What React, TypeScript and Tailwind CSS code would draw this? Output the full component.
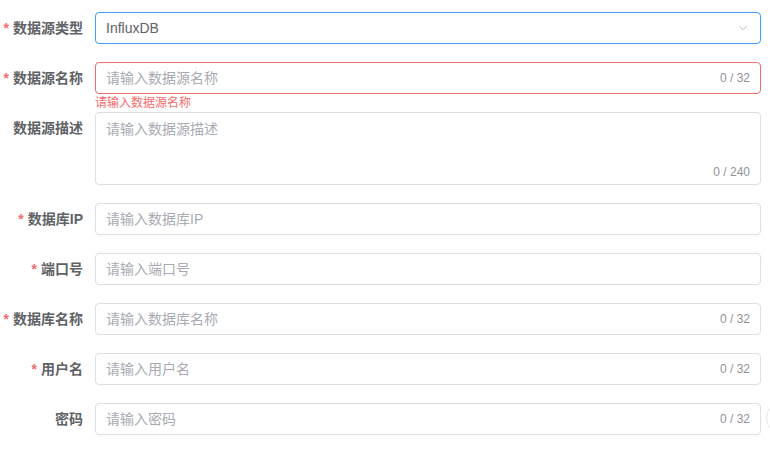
import { ChevronDown } from "lucide-react";

type Field = {
  label: string;
  required?: boolean;
  placeholder?: string;
  value?: string;
  max?: number;
  kind?: "select" | "textarea" | "input";
  error?: string;
};

const fields: Field[] = [
  { label: "数据源类型", required: true, value: "InfluxDB", kind: "select" },
  {
    label: "数据源名称",
    required: true,
    placeholder: "请输入数据源名称",
    max: 32,
    error: "请输入数据源名称",
  },
  { label: "数据源描述", placeholder: "请输入数据源描述", max: 240, kind: "textarea" },
  { label: "数据库IP", required: true, placeholder: "请输入数据库IP" },
  { label: "端口号", required: true, placeholder: "请输入端口号" },
  { label: "数据库名称", required: true, placeholder: "请输入数据库名称", max: 32 },
  { label: "用户名", required: true, placeholder: "请输入用户名", max: 32 },
  { label: "密码", placeholder: "请输入密码", max: 32 },
];

function FormItem({ field }: { field: Field }) {
  const border = field.kind === "select"
    ? "border-[#409eff]"
    : field.error
      ? "border-[#f56c6c]"
      : "border-[#dcdfe6]";

  return (
    <div className="relative mb-[18px] flex">
      <label className="w-[95px] shrink-0 pr-[12px] text-right text-[14px] font-bold leading-[32px] text-[#606266]">
        {field.required && <span className="mr-[4px] text-[#f56c6c]">*</span>}
        {field.label}
      </label>
      <div className="relative w-[666px]">
        {field.kind === "textarea" ? (
          <div className={`relative h-[73px] rounded-[4px] border bg-white ${border}`}>
            <div className="px-[10px] pt-[5px] text-[14px] leading-[22px] text-[#a8abb2]">
              {field.placeholder}
            </div>
            <span className="absolute bottom-[4px] right-[10px] text-[12px] leading-[16px] text-[#909399]">
              0 / {field.max}
            </span>
          </div>
        ) : (
          <div className={`flex h-[32px] items-center rounded-[4px] border bg-white px-[10px] ${border}`}>
            <span
              className={`flex-1 text-[14px] ${field.value ? "text-[#606266]" : "text-[#a8abb2]"}`}
            >
              {field.value ?? field.placeholder}
            </span>
            {field.kind === "select" && (
              <ChevronDown className="h-[14px] w-[14px] text-[#b0b3b8]" strokeWidth={1.5} />
            )}
            {field.max && (
              <span className="text-[12px] text-[#909399]">0 / {field.max}</span>
            )}
          </div>
        )}
        {field.error && (
          <div className="absolute left-0 top-full pt-[2px] text-[12px] leading-[14px] text-[#f56c6c]">
            {field.error}
          </div>
        )}
      </div>
    </div>
  );
}

export default function App() {
  return (
    <div
      className="relative h-[469px] w-[770px] overflow-hidden bg-white pt-[12px]"
      style={{ fontFamily: '"Liberation Sans", "Noto Sans CJK SC", sans-serif' }}
    >
      {fields.map((f) => (
        <FormItem key={f.label} field={f} />
      ))}
      <div className="absolute left-[766px] top-[402px] h-[32px] w-[32px] rounded-full border border-[#e4e7ed] bg-white" />
    </div>
  );
}
